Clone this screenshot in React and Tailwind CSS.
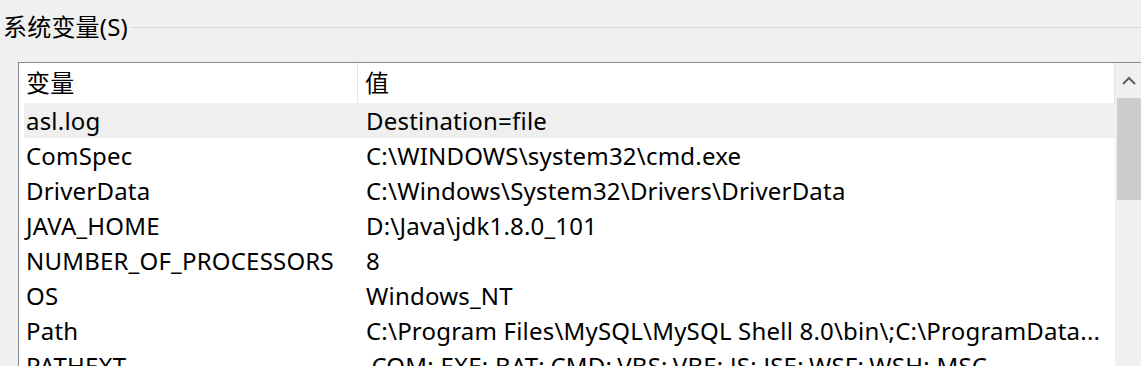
const ROWS = [
  { name: 'asl.log', value: 'Destination=file', selected: true },
  { name: 'ComSpec', value: 'C:\\WINDOWS\\system32\\cmd.exe' },
  { name: 'DriverData', value: 'C:\\Windows\\System32\\Drivers\\DriverData' },
  { name: 'JAVA_HOME', value: 'D:\\Java\\jdk1.8.0_101' },
  { name: 'NUMBER_OF_PROCESSORS', value: '8' },
  { name: 'OS', value: 'Windows_NT' },
  { name: 'Path', value: 'C:\\Program Files\\MySQL\\MySQL Shell 8.0\\bin\\;C:\\ProgramData...' },
  { name: 'PATHEXT', value: '.COM;.EXE;.BAT;.CMD;.VBS;.VBE;.JS;.JSE;.WSF;.WSH;.MSC' },
];

export default function App() {
  return (
    <div className="w-[1141px] h-[366px] overflow-hidden bg-[#f0f0f0] text-[24px] tracking-[0.2px] text-black font-['Noto_Sans','Noto_Sans_CJK_SC',sans-serif]">
      {/* Group title */}
      <div className="flex items-center h-[28px] mt-[13px]">
        <span className="pl-[3px] leading-[28px] whitespace-nowrap">系统变量(S)</span>
        <div className="flex-1 h-px bg-[#dcdcdc] ml-[3px]" />
      </div>

      {/* List box */}
      <div className="ml-[18px] mt-[21px] flex border-l border-t border-[#828790] h-[320px]">
        <div className="flex-1 bg-white">
          <div className="flex h-[40px] items-center">
            <div className="w-[339px] pl-[7px] h-full flex items-center border-r border-[#e5e5e5]">变量</div>
            <div className="flex-1 pl-[7px] h-full flex items-center border-r border-[#e5e5e5]">值</div>
          </div>
          <div className="ml-[5px]">
            {ROWS.map((r) => (
              <div
                key={r.name}
                className={`flex h-[35px] items-center whitespace-nowrap ${r.selected ? 'bg-[#efefef]' : ''}`}
              >
                <div className="w-[334px] pl-[2px]">{r.name}</div>
                <div className="pl-[8px]">{r.value}</div>
              </div>
            ))}
          </div>
        </div>

        {/* Scrollbar */}
        <div className="w-[24px] ml-[2px] bg-[#f0f0f0] flex flex-col">
          <div className="h-[35px] flex items-center justify-center">
            <svg width="14" height="9" viewBox="0 0 14 9">
              <path d="M1 8 L7 2 L13 8" fill="none" stroke="#606060" strokeWidth="2" />
            </svg>
          </div>
          <div className="h-[102px] bg-[#cdcdcd]" />
          <div className="flex-1" />
          <div className="h-[8px] flex items-start justify-center">
            <svg width="14" height="9" viewBox="0 0 14 9">
              <path d="M1 1 L7 7 L13 1" fill="none" stroke="#606060" strokeWidth="2" />
            </svg>
          </div>
        </div>
      </div>
    </div>
  );
}
